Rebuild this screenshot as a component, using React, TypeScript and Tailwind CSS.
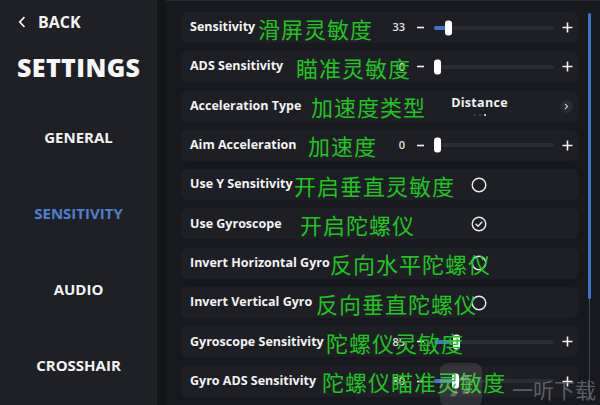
import type { ReactNode } from 'react';

type Row = {
  label: string;
  cn: string;
  cnLeft: number;
  kind: 'slider' | 'select' | 'check';
  value?: string;
  pos?: number;
  checked?: boolean;
};

const rows: Row[] = [
  { label: 'Sensitivity', cn: '滑屏灵敏度', cnLeft: 77, kind: 'slider', value: '33', pos: 11 },
  { label: 'ADS Sensitivity', cn: '瞄准灵敏度', cnLeft: 115, kind: 'slider', value: '0', pos: 0 },
  { label: 'Acceleration Type', cn: '加速度类型', cnLeft: 130, kind: 'select' },
  { label: 'Aim Acceleration', cn: '加速度', cnLeft: 127, kind: 'slider', value: '0', pos: 0 },
  { label: 'Use Y Sensitivity', cn: '开启垂直灵敏度', cnLeft: 113, kind: 'check' },
  { label: 'Use Gyroscope', cn: '开启陀螺仪', cnLeft: 119, kind: 'check', checked: true },
  { label: 'Invert Horizontal Gyro', cn: '反向水平陀螺仪', cnLeft: 149, kind: 'check' },
  { label: 'Invert Vertical Gyro', cn: '反向垂直陀螺仪', cnLeft: 135, kind: 'check' },
  { label: 'Gyroscope Sensitivity', cn: '陀螺仪灵敏度', cnLeft: 145, kind: 'slider', value: '85', pos: 19 },
  { label: 'Gyro ADS Sensitivity', cn: '陀螺仪瞄准灵敏度', cnLeft: 141, kind: 'slider', value: '80', pos: 18 },
];

const navItems = ['GENERAL', 'SENSITIVITY', 'AUDIO', 'CROSSHAIR'];

function Minus() {
  return (
    <svg width="9" height="9" viewBox="0 0 9 9">
      <path d="M1 4.5h7" stroke="#f2f2f2" strokeWidth="1.6" />
    </svg>
  );
}

function Plus() {
  return (
    <svg width="11" height="11" viewBox="0 0 11 11">
      <path d="M0.5 5.5h10M5.5 0.5v10" stroke="#f2f2f2" strokeWidth="1.6" />
    </svg>
  );
}

function Slider({ value, pos }: { value: string; pos: number }) {
  return (
    <div className="flex items-center">
      <span className="w-[24px] text-right text-[11px] font-semibold text-[#e4e4e4]">{value}</span>
      <span className="ml-[11px] flex w-[9px]">
        <Minus />
      </span>
      <div className="relative ml-[9px] h-[4px] w-[120px] rounded-full bg-[#2c2d33]">
        <div className="h-full rounded-l-full bg-[#3f76c9]" style={{ width: pos }} />
        <div
          className="absolute top-1/2 h-[15px] w-[7px] -translate-y-1/2 rounded-[3px] bg-white"
          style={{ left: pos }}
        />
      </div>
      <span className="ml-[8px] flex w-[11px]">
        <Plus />
      </span>
    </div>
  );
}

function Check({ checked }: { checked?: boolean }) {
  return (
    <div className="flex pl-[90px]">
      <svg width="16" height="16" viewBox="0 0 16 16">
        <circle cx="8" cy="8" r="6.8" fill="none" stroke="#ededed" strokeWidth="1.4" />
        {checked && (
          <path d="M5 8.3l2 2 4-4.3" fill="none" stroke="#ededed" strokeWidth="1.3" strokeLinecap="round" strokeLinejoin="round" />
        )}
      </svg>
    </div>
  );
}

function Select() {
  return (
    <div className="flex items-center">
      <div className="ml-[69px] flex w-[59px] flex-col items-center">
        <span className="-mt-[1px] text-[12.5px] leading-[16px] font-bold tracking-[0.3px] text-[#f2f2f2]">Distance</span>
        <div className="mt-[3px] flex gap-[3px]">
          <span className="h-[2px] w-[2px] rounded-full bg-[#4a4b50]" />
          <span className="h-[2px] w-[2px] rounded-full bg-[#4a4b50]" />
          <span className="h-[2px] w-[2px] rounded-full bg-white" />
        </div>
      </div>
      <div className="ml-[51px] flex h-[13px] w-[13px] items-center justify-center rounded-full bg-[#2b2c32]">
        <svg width="5" height="7" viewBox="0 0 5 7">
          <path d="M1 0.8l2.6 2.7L1 6.2" fill="none" stroke="#cfd0d3" strokeWidth="1.1" />
        </svg>
      </div>
    </div>
  );
}

function SettingRow({ row }: { row: Row }) {
  let control: ReactNode = null;
  if (row.kind === 'slider') control = <Slider value={row.value ?? '0'} pos={row.pos ?? 0} />;
  if (row.kind === 'select') control = <Select />;
  if (row.kind === 'check') control = <Check checked={row.checked} />;

  return (
    <div className="relative flex h-[31px] items-center rounded-[6px] bg-[#1e1f25] pl-[9px]">
      <span className="text-[12.5px] font-bold text-[#f3f3f3]">{row.label}</span>
      <div className="ml-auto w-[197px]">{control}</div>
      {/* green annotation overlay */}
      <span
        className="pointer-events-none absolute top-1/2 -translate-y-1/2 whitespace-nowrap text-[22px] leading-none tracking-[1px] text-[#1fc51f]"
        style={{ left: row.cnLeft, fontFamily: '"Noto Sans CJK SC", sans-serif' }}
      >
        {row.cn}
      </span>
    </div>
  );
}

export default function App() {
  return (
    <div
      className="relative flex h-[405px] w-[600px] overflow-hidden bg-[#18191e]"
      style={{ fontFamily: '"Open Sans", "Noto Sans CJK SC", sans-serif' }}
    >
      {/* Sidebar */}
      <aside className="flex w-[157px] shrink-0 flex-col bg-[#1f2025]">
        <div className="flex h-[44px] items-center pl-[18px]">
          <svg width="8" height="12" viewBox="0 0 8 12">
            <path d="M6.5 1L1.8 6l4.7 5" fill="none" stroke="#f2f2f2" strokeWidth="1.8" />
          </svg>
          <span className="ml-[12px] text-[16px] font-bold text-[#f4f4f4]">BACK</span>
        </div>
        <div className="flex h-[48px] items-center pl-[17px]">
          <span className="text-[25px] font-extrabold tracking-[0.4px] text-[#f6f6f6]">SETTINGS</span>
        </div>
        <nav className="mt-[7px] flex flex-col">
          {navItems.map((item) => (
            <div key={item} className="flex h-[76px] items-center justify-center">
              <span
                className={`text-[15px] font-bold ${item === 'SENSITIVITY' ? 'text-[#4c80d0]' : 'text-[#f2f2f2]'}`}
              >
                {item}
              </span>
            </div>
          ))}
        </nav>
      </aside>

      <div className="w-[9px] shrink-0 bg-[#141519]" />

      {/* Main list */}
      <main className="flex flex-1 border-t border-[#2a2b30] pl-[15px]">
        <div className="flex w-[397px] flex-col gap-[8.3px] pt-[11px]">
          {rows.map((row) => (
            <SettingRow key={row.label} row={row} />
          ))}
        </div>
        <div className="relative ml-[10px] mt-[12px] h-[388px] w-[3px]">
          <div className="absolute left-[1px] top-0 h-full w-[1px] bg-[#45464b]" />
          <div className="absolute left-0 top-0 h-[286px] w-[3px] rounded-full bg-[#3d72c4]" />
        </div>
      </main>

      {/* watermark */}
      <div className="pointer-events-none absolute left-[440px] top-[363px] flex items-start whitespace-nowrap">
        <div className="flex h-[44px] w-[42px] shrink-0 items-center justify-center rounded-[8px] bg-white/10">
          <span className="text-[22px] text-white/25">♫</span>
        </div>
        <span
          className="ml-[30px] mt-[16px] text-[21px] leading-none text-[#7a7b7f]/70"
          style={{ fontFamily: '"Noto Sans CJK SC", sans-serif' }}
        >
          一听下载
        </span>
      </div>
    </div>
  );
}
